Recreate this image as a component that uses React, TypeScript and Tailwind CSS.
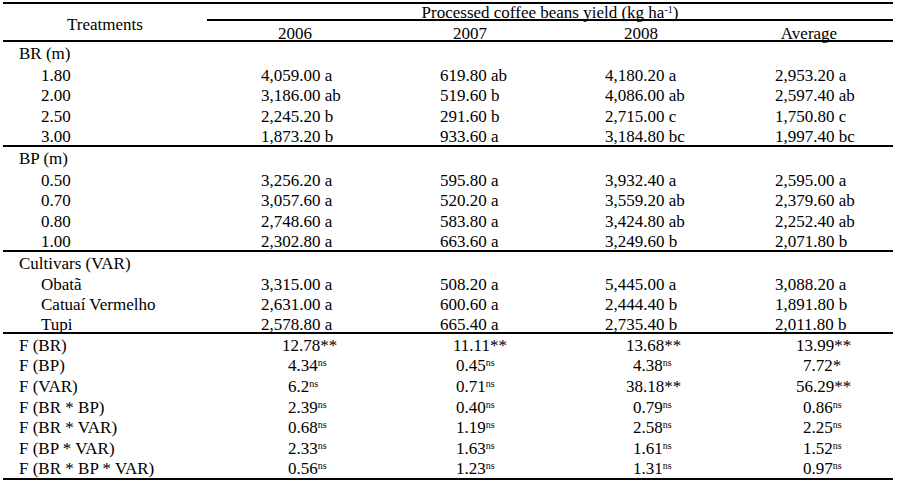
import React from "react";

type Row = [string, string, string, string, string];
type FVal = { v: string; ns?: boolean; s?: string };

const BR: Row[] = [
  ["1.80", "4,059.00 a", "619.80 ab", "4,180.20 a", "2,953.20 a"],
  ["2.00", "3,186.00 ab", "519.60 b", "4,086.00 ab", "2,597.40 ab"],
  ["2.50", "2,245.20 b", "291.60 b", "2,715.00 c", "1,750.80 c"],
  ["3.00", "1,873.20 b", "933.60 a", "3,184.80 bc", "1,997.40 bc"],
];
const BP: Row[] = [
  ["0.50", "3,256.20 a", "595.80 a", "3,932.40 a", "2,595.00 a"],
  ["0.70", "3,057.60 a", "520.20 a", "3,559.20 ab", "2,379.60 ab"],
  ["0.80", "2,748.60 a", "583.80 a", "3,424.80 ab", "2,252.40 ab"],
  ["1.00", "2,302.80 a", "663.60 a", "3,249.60 b", "2,071.80 b"],
];
const VAR: Row[] = [
  ["Obatã", "3,315.00 a", "508.20 a", "5,445.00 a", "3,088.20 a"],
  ["Catuaí Vermelho", "2,631.00 a", "600.60 a", "2,444.40 b", "1,891.80 b"],
  ["Tupi", "2,578.80 a", "665.40 a", "2,735.40 b", "2,011.80 b"],
];
const F: [string, FVal[]][] = [
  ["F (BR)", [{ v: "12.78", s: "**" }, { v: "11.11", s: "**" }, { v: "13.68", s: "**" }, { v: "13.99", s: "**" }]],
  ["F (BP)", [{ v: "4.34", ns: true }, { v: "0.45", ns: true }, { v: "4.38", ns: true }, { v: "7.72*" }]],
  ["F (VAR)", [{ v: "6.2", ns: true }, { v: "0.71", ns: true }, { v: "38.18", s: "**" }, { v: "56.29", s: "**" }]],
  ["F (BR * BP)", [{ v: "2.39", ns: true }, { v: "0.40", ns: true }, { v: "0.79", ns: true }, { v: "0.86", ns: true }]],
  ["F (BR * VAR)", [{ v: "0.68", ns: true }, { v: "1.19", ns: true }, { v: "2.58", ns: true }, { v: "2.25", ns: true }]],
  ["F (BP * VAR)", [{ v: "2.33", ns: true }, { v: "1.63", ns: true }, { v: "1.61", ns: true }, { v: "1.52", ns: true }]],
  ["F (BR * BP * VAR)", [{ v: "0.56", ns: true }, { v: "1.23", ns: true }, { v: "1.31", ns: true }, { v: "0.97", ns: true }]],
];

const dataPad = ["pl-[54px]", "pl-[57px]", "pl-[48px]", "pl-[50px]"];
const fPad = ["pl-[81px]", "pl-[73px]", "pl-[76px]", "pl-[78px]"];
const fPadStar = ["pl-[75px]", "pl-[70px]", "pl-[69px]", "pl-[71px]"];

const GRID = "grid grid-cols-[204px_176px_174px_168px_168px]";

function Section({ title, rows, h }: { title: string; rows: Row[]; h: string }) {
  return (
    <div className="border-b-2 border-black">
      <div className={`${GRID} ${h} items-center pt-[3px]`}>
        <div className="pl-[16px]">{title}</div>
      </div>
      {rows.map((r) => (
        <div key={r[0]} className={`${GRID} ${h} items-center pt-[4px]`}>
          <div className="pl-[38px] whitespace-nowrap">{r[0]}</div>
          {r.slice(1).map((c, i) => (
            <div key={i} className={`${dataPad[i]} whitespace-nowrap`}>
              {c}
            </div>
          ))}
        </div>
      ))}
    </div>
  );
}

export default function App() {
  return (
    <div
      className="w-[898px] h-[484px] bg-white text-black pt-[2px] pl-[3px] text-[17px] overflow-hidden"
      style={{ fontFamily: '"Liberation Serif", "Times New Roman", serif' }}
    >
      <div className="w-[890px] border-t-2 border-black leading-none">
        {/* header */}
        <div className="flex border-b-2 border-black">
          <div className="w-[204px] flex items-center justify-center pt-[5px]">Treatments</div>
          <div className="flex-1 flex flex-col">
            <div className="h-[17px] border-b-2 border-black flex items-center justify-center whitespace-nowrap pt-[2px]">
              <span>
                Processed coffee beans yield (kg ha
                <sup className="text-[10px]">-1</sup>)
              </span>
            </div>
            <div className="h-[19px] grid grid-cols-[176px_174px_168px_168px] items-center text-center pt-[4px]">
              <div>2006</div>
              <div>2007</div>
              <div>2008</div>
              <div>Average</div>
            </div>
          </div>
        </div>

        <Section title="BR (m)" rows={BR} h="h-[20.6px]" />
        <Section title="BP (m)" rows={BP} h="h-[20.6px]" />
        <Section title="Cultivars (VAR)" rows={VAR} h="h-[20px]" />

        <div className="border-b-2 border-black">
          {F.map(([label, vals]) => (
            <div key={label} className={`${GRID} h-[20.6px] items-center pt-[2px]`}>
              <div className="pl-[16px] whitespace-nowrap">{label}</div>
              {vals.map((f, i) => (
                <div key={i} className={`${f.s ? fPadStar[i] : fPad[i]} whitespace-nowrap`}>
                  {f.v}
                  {f.s ? f.s : null}
                  {f.ns ? <sup className="text-[10px]">ns</sup> : null}
                </div>
              ))}
            </div>
          ))}
        </div>
      </div>
    </div>
  );
}
